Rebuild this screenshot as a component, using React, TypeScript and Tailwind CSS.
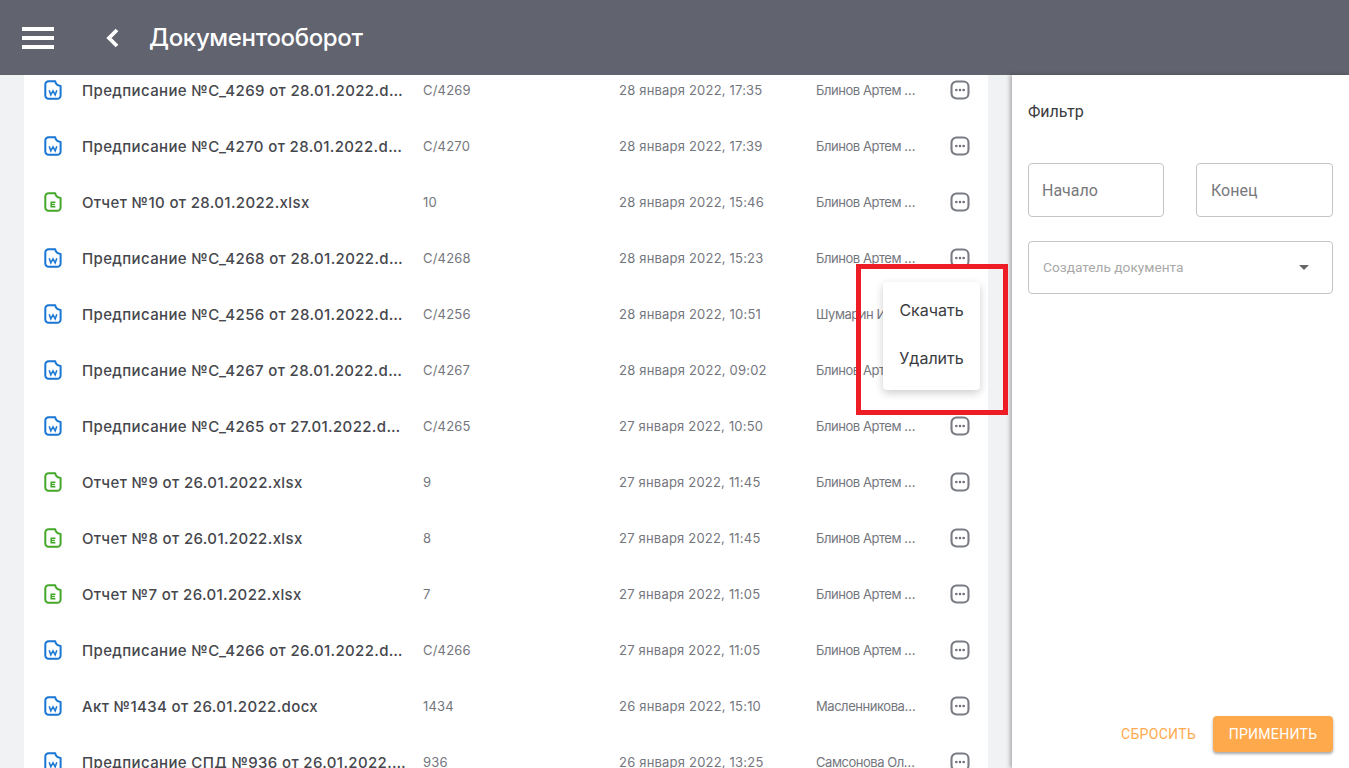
import React from 'react';

type Doc = { name: string; type: 'w' | 'e'; num: string; date: string; author: string };

const docs: Doc[] = [
  { name: 'Предписание №С_4269 от 28.01.2022.docx', type: 'w', num: 'С/4269', date: '28 января 2022, 17:35', author: 'Блинов Артем Сергеевич' },
  { name: 'Предписание №С_4270 от 28.01.2022.docx', type: 'w', num: 'С/4270', date: '28 января 2022, 17:39', author: 'Блинов Артем Сергеевич' },
  { name: 'Отчет №10 от 28.01.2022.xlsx', type: 'e', num: '10', date: '28 января 2022, 15:46', author: 'Блинов Артем Сергеевич' },
  { name: 'Предписание №С_4268 от 28.01.2022.docx', type: 'w', num: 'С/4268', date: '28 января 2022, 15:23', author: 'Блинов Артем Сергеевич' },
  { name: 'Предписание №С_4256 от 28.01.2022.docx', type: 'w', num: 'С/4256', date: '28 января 2022, 10:51', author: 'Шумарин Иван Петрович' },
  { name: 'Предписание №С_4267 от 28.01.2022.docx', type: 'w', num: 'С/4267', date: '28 января 2022, 09:02', author: 'Блинов Артем Сергеевич' },
  { name: 'Предписание №С_4265 от 27.01.2022.docx', type: 'w', num: 'С/4265', date: '27 января 2022, 10:50', author: 'Блинов Артем Сергеевич' },
  { name: 'Отчет №9 от 26.01.2022.xlsx', type: 'e', num: '9', date: '27 января 2022, 11:45', author: 'Блинов Артем Сергеевич' },
  { name: 'Отчет №8 от 26.01.2022.xlsx', type: 'e', num: '8', date: '27 января 2022, 11:45', author: 'Блинов Артем Сергеевич' },
  { name: 'Отчет №7 от 26.01.2022.xlsx', type: 'e', num: '7', date: '27 января 2022, 11:05', author: 'Блинов Артем Сергеевич' },
  { name: 'Предписание №С_4266 от 26.01.2022.docx', type: 'w', num: 'С/4266', date: '27 января 2022, 11:05', author: 'Блинов Артем Сергеевич' },
  { name: 'Акт №1434 от 26.01.2022.docx', type: 'w', num: '1434', date: '26 января 2022, 15:10', author: 'Масленникова Анна Ивановна' },
  { name: 'Предписание СПД №936 от 26.01.2022.docx', type: 'w', num: '936', date: '26 января 2022, 13:25', author: 'Самсонова Ольга Викторовна' },
];

function FileIcon({ type }: { type: 'w' | 'e' }) {
  const color = type === 'w' ? '#1976d2' : '#43a82a';
  return (
    <svg width="18" height="20" viewBox="0 0 18 20" fill="none" className="shrink-0">
      <path d="M5 1.2h6.2c.3 2.8 2 4.4 5.4 4.8V15.5a3.3 3.3 0 0 1-3.3 3.3H4.6a3.3 3.3 0 0 1-3.3-3.3V4.6A3.4 3.4 0 0 1 5 1.2Z" stroke={color} strokeWidth="2" strokeLinejoin="round" />
      {type === 'w' ? (
        <path d="M5.2 10.2l1.6 4.6 2.2-4 2.2 4 1.6-4.6" stroke={color} strokeWidth="1.5" />
      ) : (
        <path d="M11.4 10.2H7.2v4.6h4.2M7.2 12.5h3.6" stroke={color} strokeWidth="1.5" />
      )}
    </svg>
  );
}

function MoreIcon() {
  return (
    <svg width="20" height="20" viewBox="0 0 20 20" fill="none" className="shrink-0">
      <rect x="1.5" y="1.5" width="17" height="17" rx="5" stroke="#7a7c85" strokeWidth="2.1" />
      <circle cx="6.3" cy="10" r="1.3" fill="#70727c" />
      <circle cx="10" cy="10" r="1.3" fill="#70727c" />
      <circle cx="13.7" cy="10" r="1.3" fill="#70727c" />
    </svg>
  );
}

export default function App() {
  return (
    <div className="relative h-screen overflow-hidden flex flex-col bg-[#f1f2f4] font-['Inter','Noto_Sans',sans-serif]">
      <header className="h-[75px] shrink-0 bg-[#61636f] flex items-center text-white">
        <div className="ml-[22px] w-[32px] flex flex-col gap-[5px]">
          <span className="block h-[4px] bg-white" />
          <span className="block h-[4px] bg-white" />
          <span className="block h-[4px] bg-white" />
        </div>
        <svg width="16" height="24" viewBox="0 0 16 24" fill="none" className="ml-[50px]">
          <path d="M13 4 5 12l8 8" stroke="white" strokeWidth="3.8" />
        </svg>
        <h1 className="ml-[29px] text-[24px] font-medium tracking-[-0.35px]">Документооборот</h1>
      </header>

      <div className="flex-1 min-h-0 flex">
        <main className="ml-[24px] w-[964px] shrink-0 bg-white overflow-hidden">
          <div className="-mt-[13px]">
            {docs.map((d) => (
              <div key={d.name} className="h-[56px] flex items-center">
                <div className="ml-[20px] w-[38px]"><FileIcon type={d.type} /></div>
                <div className="w-[341px] pr-[14px] pt-[2px] truncate text-[15px] font-medium tracking-[0.36px] text-[#46474d]">{d.name}</div>
                <div className="w-[196px] pt-[2px] text-[13px] tracking-[0.2px] text-[#74767e]">{d.num}</div>
                <div className="w-[197px] pt-[2px] text-[13px] tracking-[0.2px] text-[#74767e]">{d.date}</div>
                <div className="w-[100px] pt-[2px] truncate text-[13px] tracking-[-0.45px] text-[#74767e]">{d.author}</div>
                <div className="ml-[34px]"><MoreIcon /></div>
              </div>
            ))}
          </div>
        </main>

        <aside className="ml-[24px] flex-1 bg-white shadow-[-2px_0_4px_rgba(0,0,0,0.3)] flex flex-col px-[16px] pb-[16px] font-['Roboto',sans-serif]">
          <h2 className="mt-[27px] text-[16px] leading-[20px] text-[#3a3b40]">Фильтр</h2>
          <div className="mt-[41px] flex justify-between">
            <div className="w-[136px] h-[54px] pt-[2px] border border-[#c4c4c4] rounded-[4px] flex items-center px-[13px] text-[16px] text-[#77787c]">Начало</div>
            <div className="w-[137px] h-[54px] pt-[2px] border border-[#c4c4c4] rounded-[4px] flex items-center px-[14px] text-[16px] text-[#77787c]">Конец</div>
          </div>
          <div className="mt-[24px] h-[53px] border border-[#c4c4c4] rounded-[4px] flex items-center justify-between pl-[14px] pr-[23px] text-[13.7px] text-[#a9a9a9]">
            <span>Создатель документа</span>
            <span className="w-0 h-0 border-x-[5px] border-x-transparent border-t-[5px] border-t-[#666666]" />
          </div>
          <div className="mt-auto flex items-center justify-end gap-[17px] text-[14px] tracking-[0.3px]">
            <span className="text-[#ffa94d]">СБРОСИТЬ</span>
            <span className="h-[36px] w-[120px] bg-[#ffa94d] text-white rounded-[4px] flex items-center justify-center shadow-[0_2px_3px_rgba(0,0,0,0.35)]">ПРИМЕНИТЬ</span>
          </div>
        </aside>
      </div>

      {/* menu and red marker over the list */}
      <div className="absolute left-[883px] top-[282px] w-[97px] h-[108px] bg-white rounded-[4px] shadow-[0_3px_8px_rgba(0,0,0,0.2)] py-[4px] text-[16px] text-[#3a3b40]">
        <div className="h-[48px] flex items-center justify-center">Скачать</div>
        <div className="h-[48px] flex items-center justify-center">Удалить</div>
      </div>
      <div className="absolute left-[856px] top-[264px] w-[152px] h-[151px] border-[5px] border-[#ee1c25]" />
    </div>
  );
}
